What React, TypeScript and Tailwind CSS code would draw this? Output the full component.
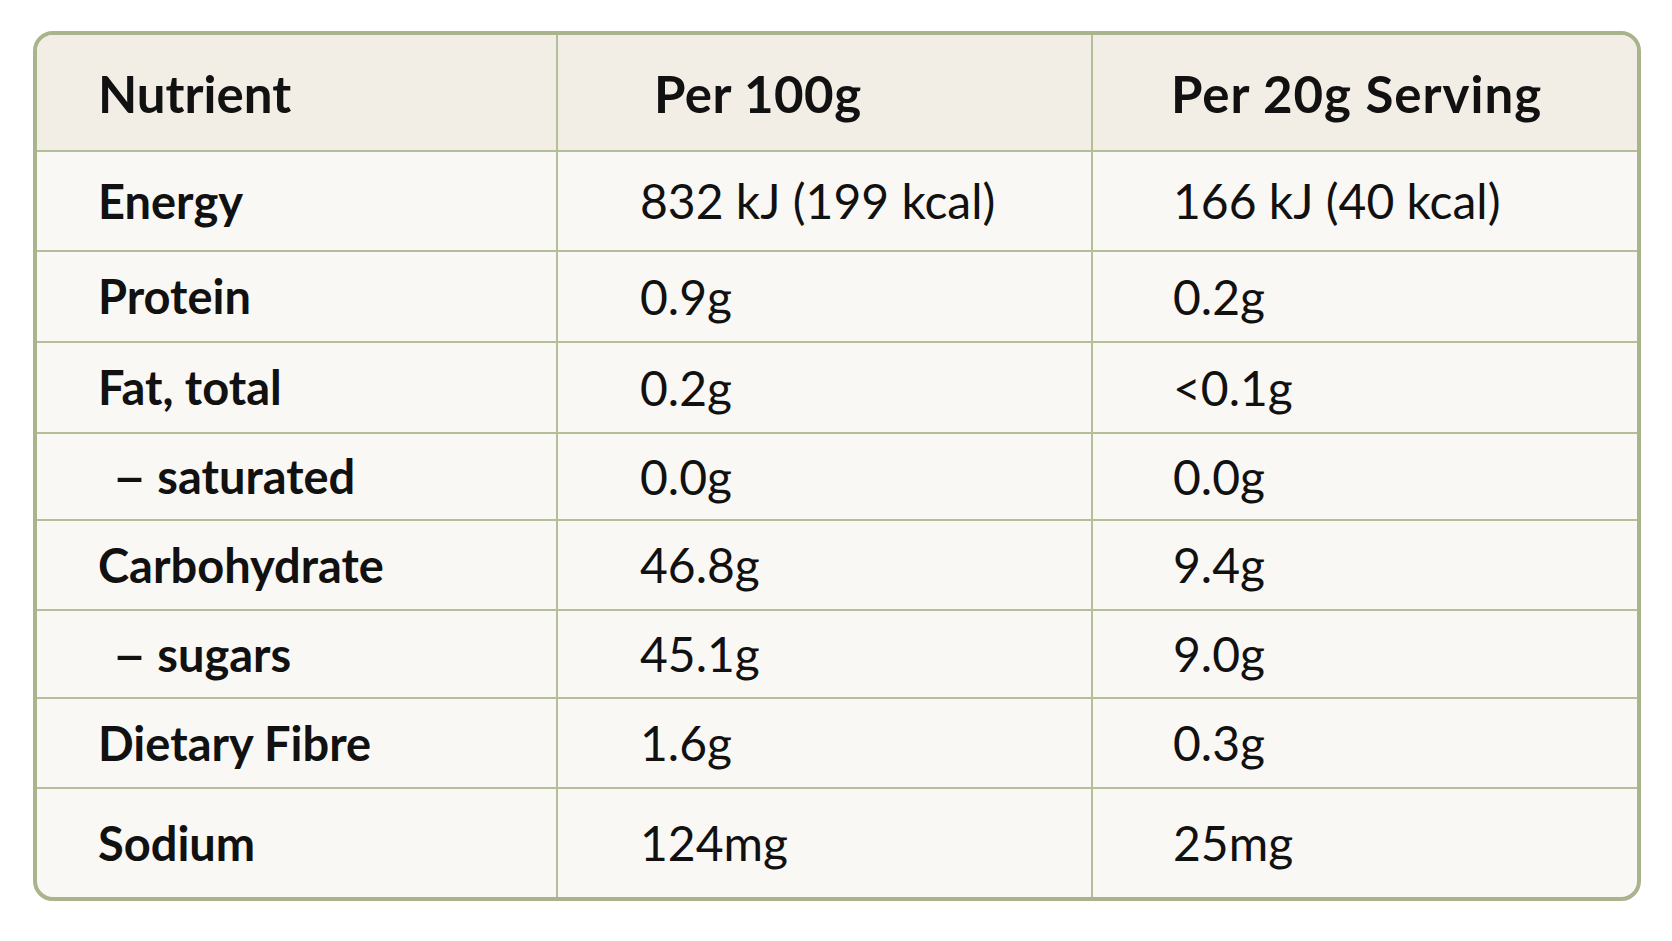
const rows = [
  { name: "Energy", per100: "832 kJ (199 kcal)", serving: "166 kJ (40 kcal)", h: "h-[98px]" },
  { name: "Protein", per100: "0.9g", serving: "0.2g", h: "h-[89px]" },
  { name: "Fat, total", per100: "0.2g", serving: "<0.1g", h: "h-[89px]" },
  { name: "saturated", per100: "0.0g", serving: "0.0g", h: "h-[85px]", sub: true },
  { name: "Carbohydrate", per100: "46.8g", serving: "9.4g", h: "h-[88px]" },
  { name: "sugars", per100: "45.1g", serving: "9.0g", h: "h-[86px]", sub: true },
  { name: "Dietary Fibre", per100: "1.6g", serving: "0.3g", h: "h-[88px]" },
  { name: "Sodium", per100: "124mg", serving: "25mg", h: "h-[108px]" },
];

const App = () => {
  return (
    <div className="w-[1672px] h-[941px] bg-white pt-[31px] pl-[33px] font-['Lato','Liberation_Sans',sans-serif] text-[#111111]">
      <div className="w-[1608px] border-[4px] border-[#a9b48c] rounded-[20px] overflow-hidden bg-[#faf8f4]">
        {/* header */}
        <div className="grid grid-cols-[519px_2px_533px_2px_544px] h-[115px] bg-[#f2eee6] font-bold">
          <div className="flex items-center pl-[61px] pt-[4px] text-[51px]">Nutrient</div>
          <div className="bg-[#b4be98]" />
          <div className="flex items-center pl-[96px] pt-[4px] text-[51px] tracking-[0.5px]">Per 100g</div>
          <div className="bg-[#b4be98]" />
          <div className="flex items-center pl-[78px] pt-[4px] text-[51px] tracking-[1px]">Per 20g Serving</div>
        </div>
        {rows.map((row) => (
          <div key={row.name}>
            <div className="h-[2px] bg-[#b4be98]" />
            <div className={`grid grid-cols-[519px_2px_533px_2px_544px] ${row.h} text-[48px]`}>
              <div className="flex items-center pl-[61px] font-bold text-[47px]">
                {row.sub && <span className="ml-[18px] mr-[14px] scale-x-125">–</span>}
                <span>{row.name}</span>
              </div>
              <div className="bg-[#b4be98]" />
              <div className="flex items-center pl-[82px]">{row.per100}</div>
              <div className="bg-[#b4be98]" />
              <div className="flex items-center pl-[80px]">{row.serving}</div>
            </div>
          </div>
        ))}
      </div>
    </div>
  );
};

export default App;
